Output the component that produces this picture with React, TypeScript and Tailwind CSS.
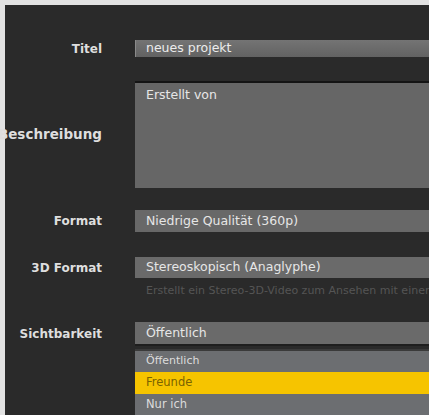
const font = { fontFamily: '"DejaVu Sans", Verdana, sans-serif' };

function Label({ text, h, size = "text-[12px]" }: { text: string; h: string; size?: string }) {
  return (
    <div className={`w-[130px] shrink-0 flex items-center justify-end pr-[33px] ${h}`}>
      <span className={`whitespace-nowrap font-bold text-[#dedede] ${size}`}>{text}</span>
    </div>
  );
}

export default function App() {
  return (
    <div className="w-[429px] h-[415px] overflow-hidden bg-[#e2e2e2] pl-[5px] pt-[5px]" style={font}>
      <div className="h-full bg-[#2a2a2a] pt-[35px] flex flex-col">
        {/* Titel */}
        <div className="flex">
          <Label text="Titel" h="h-[17px]" />
          <div className="flex-1 h-[17px] bg-gradient-to-b from-[#747474] to-[#626262] border-l border-[#8a8a8a] pl-[10px] flex items-center text-[12.5px] text-[#ececec] whitespace-nowrap">
            neues projekt
          </div>
        </div>

        {/* Beschreibung */}
        <div className="flex mt-[24px]">
          <Label text="Beschreibung" h="h-[107px]" size="text-[13.5px]" />
          <div className="flex-1 h-[107px] bg-[#666666] border-t-2 border-[#141414] pl-[11px] pt-[3px] text-[12.5px] text-[#e6e6e6] whitespace-nowrap">
            Erstellt von
          </div>
        </div>

        {/* Format */}
        <div className="flex mt-[22px]">
          <Label text="Format" h="h-[22px]" />
          <div className="flex-1 h-[22px] bg-[#686868] pl-[11px] flex items-center text-[12.5px] text-[#e6e6e6] whitespace-nowrap">
            Niedrige Qualität (360p)
          </div>
        </div>

        {/* 3D Format */}
        <div className="flex mt-[25px]">
          <Label text="3D Format" h="h-[21px]" />
          <div className="flex-1 min-w-0">
            <div className="h-[21px] bg-[#6a6a6a] pl-[11px] flex items-center text-[12.5px] text-[#e6e6e6] whitespace-nowrap">
              Stereoskopisch (Anaglyphe)
            </div>
            <div className="mt-[6px] pl-[11px] text-[11px] leading-[13px] text-[#555555] whitespace-nowrap overflow-hidden">
              Erstellt ein Stereo-3D-Video zum Ansehen mit einer Anaglyphenbrille
            </div>
          </div>
        </div>

        {/* Sichtbarkeit */}
        <div className="flex mt-[25px]">
          <Label text="Sichtbarkeit" h="h-[24px]" />
          <div className="flex-1 min-w-0">
            <div className="h-[24px] bg-[#6a6a6a] border-b-2 border-[#1e1e1e] pl-[11px] flex items-center text-[12.5px] text-[#e6e6e6] whitespace-nowrap">
              Öffentlich
            </div>
            <div className="mt-[3px] border-t-2 border-[#3a3a3a] bg-[#6c6e71]">
              <div className="h-[21px] pl-[11px] pt-[2px] text-[11px] text-[#dcdcdc] whitespace-nowrap">Öffentlich</div>
              <div className="h-[22px] bg-[#f6c400] pl-[11px] flex items-center text-[11.5px] text-[#7a6300] whitespace-nowrap">Freunde</div>
              <div className="h-[22px] pl-[11px] flex items-center text-[11.5px] text-[#dcdcdc] whitespace-nowrap">Nur ich</div>
            </div>
          </div>
        </div>
      </div>
    </div>
  );
}
